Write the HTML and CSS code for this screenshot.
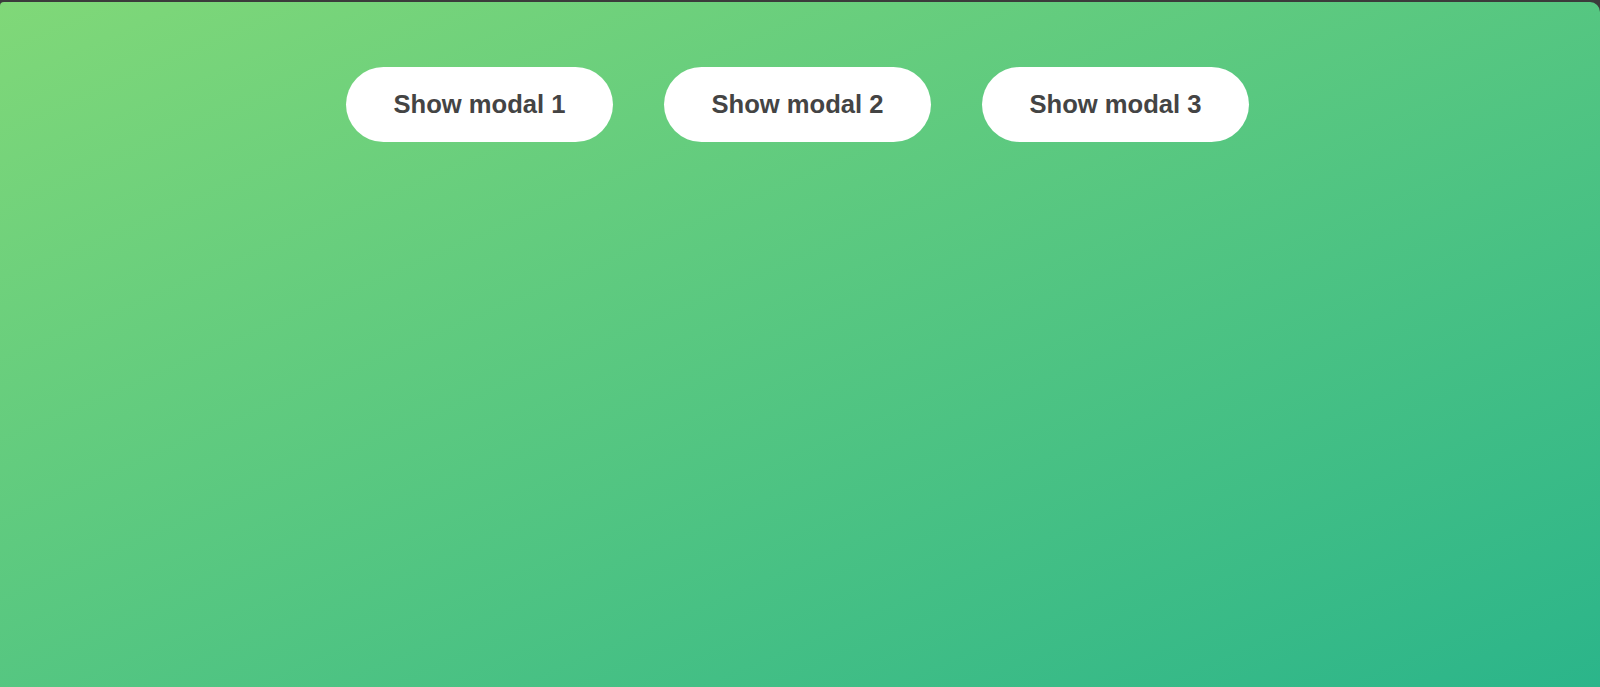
FILE: index.html
```html
<!DOCTYPE html>
<html lang="en">
<head>
<meta charset="utf-8">
<title>Modals</title>
<link rel="stylesheet" href="styles.css">
</head>
<body>
<div class="page">
  <div class="buttons">
    <button class="btn">Show modal 1</button>
    <button class="btn">Show modal 2</button>
    <button class="btn">Show modal 3</button>
  </div>
</div>
</body>
</html>
```

FILE: styles.css
```css
html, body {
  margin: 0;
  padding: 0;
  height: 100%;
  background: #3b3b3b;
}
body {
  padding-top: 2px;
  box-sizing: border-box;
}
.page {
  height: 100%;
  background: linear-gradient(to bottom right, #80d878, #2bb58a);
  border-top-left-radius: 4px;
  border-top-right-radius: 10px;
  box-sizing: border-box;
  padding-top: 65px;
  font-family: "Liberation Sans", Arial, sans-serif;
}
.buttons {
  display: flex;
  justify-content: center;
  gap: 51px;
  padding-right: 5px;
}
.btn {
  width: 267px;
  height: 75px;
  border: none;
  border-radius: 38px;
  background: #fff;
  color: #444;
  font-family: "Liberation Sans", Arial, sans-serif;
  font-weight: bold;
  font-size: 25.6px;
  padding: 0;
  cursor: pointer;
}
```
